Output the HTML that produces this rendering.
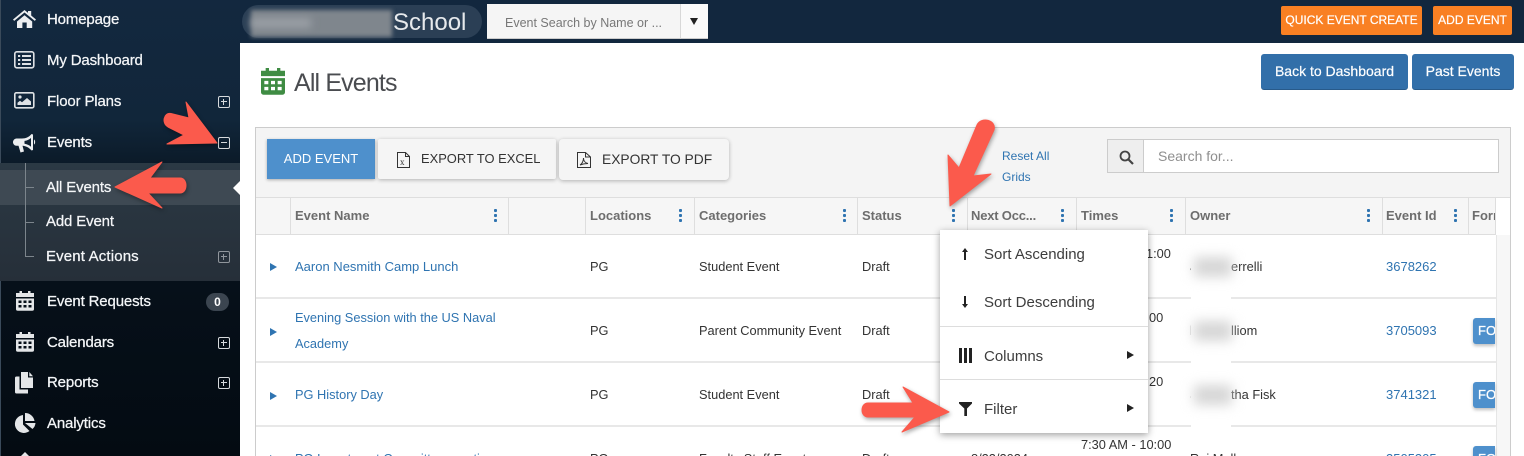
<!DOCTYPE html>
<html lang="en"><head><meta charset="utf-8"><title>All Events</title>
<style>
*{box-sizing:border-box}
html,body{margin:0;padding:0;width:1524px;height:456px;overflow:hidden;background:#fff}
body{position:relative;font-family:"Liberation Sans",Arial,sans-serif;color:#333}
.a,.t{position:absolute}
.t{white-space:nowrap;line-height:20px;font-size:12.8px;color:#333;margin-top:1px}
.n{font-size:15px;color:#f4f6f8;left:47px;-webkit-text-stroke:.25px #f4f6f8;letter-spacing:-.15px}
.s{left:46px}
.l{color:#2f74b1;font-size:12.8px}
.h{font-size:13px;font-weight:bold;color:#6d6d6d;top:205px}
.m{font-size:15px;color:#3d3d3d;left:984px}
.v{position:absolute;top:198px;width:1px;height:36px;background:#dedede}
.d{position:absolute;width:3px;height:13px;top:209px;background:radial-gradient(circle at 1.5px 1.5px,#2f74b1 1.5px,transparent 1.8px) 0 0/3px 5px repeat-y}
.r{position:absolute;left:256px;width:1240px;height:2px;background:#e8e8e8}
.p{position:absolute;left:218px;width:12px;height:12px;border:1.2px solid #d7dadd;border-radius:2px}
.p:before{content:"";position:absolute;left:2px;right:2px;top:3.9px;height:1.3px;background:#d7dadd}
.p.o:after{content:"";position:absolute;top:2px;bottom:2px;left:3.9px;width:1.3px;background:#d7dadd}
.x{position:absolute;width:0;height:0;border-left:7px solid #2f74b1;border-top:4px solid transparent;border-bottom:4px solid transparent;left:270px}
.fo{position:absolute;left:1473px;width:22px;height:26px;background:#4e90cc;border-radius:3px 0 0 3px;color:#fff;font-size:13px;-webkit-text-stroke:.3px #fff;line-height:26px;padding-left:5px;overflow:hidden;box-shadow:0 2px 3px rgba(0,0,0,.25)}
.b{position:absolute;background:#f5f5f5;border-radius:3px;box-shadow:0 1px 4px rgba(0,0,0,.28);color:#333;font-size:13px;line-height:36px}
.blob{position:absolute;left:1194px;width:38px;height:20px;background:#d6d6d6;filter:blur(6px)}
svg{position:absolute;overflow:visible}
</style></head><body>

<!-- sidebar -->
<div class="a" style="left:0;top:0;width:240px;height:456px;background:linear-gradient(#13283f 0,#11263a 120px,#0b1a28 165px,#06101a 280px,#040b12 456px);border-left:1px solid #3a4a5a"></div>
<div class="a" style="left:0;top:163px;width:240px;height:118px;background:linear-gradient(#2b3944,#262f39)"></div>
<div class="a" style="left:0;top:170px;width:240px;height:35px;background:#3e4953"></div>
<div class="a" style="left:233px;top:181px;width:0;height:0;border-right:7px solid #fff;border-top:7px solid transparent;border-bottom:7px solid transparent"></div>
<div class="a" style="left:25px;top:163px;width:1px;height:93px;background:#7c858c"></div>
<div class="a" style="left:25px;top:187px;width:9px;height:1px;background:#7c858c"></div>
<div class="a" style="left:25px;top:222px;width:9px;height:1px;background:#7c858c"></div>
<div class="a" style="left:25px;top:256px;width:9px;height:1px;background:#7c858c"></div>

<svg style="left:13px;top:9px" width="24" height="22" viewBox="0 0 24 22"><path fill="#eceef0" d="M0 10.500 11.500 1 15 3.900V2h3.200v4.500L23 10.500l-1.200 1.400L11.500 3.500 1.200 11.900z"/><path fill="#eceef0" d="M4 12.500 11.500 6.300 19.200 12.500V19h-5.500v-5.500H9.400V19H4z"/></svg>
<svg style="left:14px;top:51px" width="21" height="18" viewBox="0 0 21 18"><rect x=".8" y=".8" width="19" height="16" rx="2" fill="none" stroke="#dfe2e5" stroke-width="1.6"/><path fill="#dfe2e5" d="M4 4h2.200v2H4zM8 4h9v2H8zM4 8h2.200v2H4zM8 8h9v2H8zM4 12h2.200v2H4zM8 12h9v2H8z"/></svg>
<svg style="left:14px;top:92px" width="21" height="17" viewBox="0 0 21 17"><rect x=".8" y=".8" width="19" height="15" rx="1.500" fill="none" stroke="#dfe2e5" stroke-width="1.600"/><circle cx="6" cy="5" r="1.600" fill="#dfe2e5"/><path fill="#dfe2e5" d="M3.500 13v-2.300l2.500-2 2 1.500 5-4.200 4 3.500V13z"/></svg>
<svg style="left:13px;top:133px" width="23" height="20" viewBox="0 0 23 20"><path fill="#eceef0" d="M20 1.500v15.500l-1.400.5C16 14.500 13 13 9.500 12.700L11 18.500 7.500 19.500 5.500 12.700H3.500C1.500 12.700 0 11 0 9.200S1.500 5.500 3.500 5.500H9c4 0 7-1.500 9.600-4.500zM18 5c-2 1.800-4.200 2.600-6.500 2.900v2.900c2.300.4 4.500 1.200 6.500 2.900z"/><path fill="#eceef0" d="M21 6.500c1.500.6 1.500 4.500 0 5z"/></svg>
<svg style="left:16px;top:291px" width="18" height="20" viewBox="0 0 18 20"><path fill="#e4e6e8" fill-rule="evenodd" d="M3.500 0h2.500v2h6V0h2.500v2H18v4H0V2h3.500zM0 7.500h18V18a1.800 1.800 0 0 1-1.800 1.800H1.800A1.800 1.800 0 0 1 0 18zM2.500 9.500v2.500h3V9.500zm5 0v2.500h3V9.500zm5 0v2.500h3V9.500zm-10 4.500v2.500h3V14zm5 0v2.500h3V14zm5 0v2.500h3V14z"/></svg>
<svg style="left:16px;top:332px" width="18" height="20" viewBox="0 0 18 20"><path fill="#e4e6e8" fill-rule="evenodd" d="M3.500 0h2.500v2h6V0h2.500v2H18v4H0V2h3.500zM0 7.500h18V18a1.800 1.800 0 0 1-1.800 1.800H1.800A1.800 1.800 0 0 1 0 18zM2.500 9.500v2.500h3V9.500zm5 0v2.500h3V9.500zm5 0v2.500h3V9.500zm-10 4.500v2.500h3V14zm5 0v2.500h3V14zm5 0v2.500h3V14z"/></svg>
<svg style="left:15px;top:372px" width="20" height="22" viewBox="0 0 20 22"><path fill="#e4e6e8" d="M6 0h7v5.500h5V16H6z"/><path fill="#e4e6e8" d="M14.300 0 18 4.200h-3.700zM4.500 4.500v13H13v4H1.500A1.500 1.500 0 0 1 0 20V6a1.500 1.500 0 0 1 1.500-1.500z"/></svg>
<svg style="left:14px;top:413px" width="22" height="20" viewBox="0 0 22 20"><path fill="#e4e6e8" d="M9 2v9.500l6.500 6.500A9 9 0 1 1 9 2zM11 0a9.500 9.500 0 0 1 9.500 8H11zM11 10h10.500a9 9 0 0 1-3 6z"/></svg>
<div class="a" style="left:20px;top:452px;width:0;height:0;border-left:5px solid transparent;border-right:5px solid transparent;border-bottom:5px solid #e4e6e8"></div>

<div class="t n" style="top:9px">Homepage</div>
<div class="t n" style="top:50px">My Dashboard</div>
<div class="t n" style="top:91px">Floor Plans</div>
<div class="t n" style="top:132px">Events</div>
<div class="t n s" style="top:177px">All Events</div>
<div class="t n s" style="top:211px">Add Event</div>
<div class="t n s" style="top:246px;letter-spacing:.15px">Event Actions</div>
<div class="t n" style="top:291px">Event Requests</div>
<div class="t n" style="top:332px">Calendars</div>
<div class="t n" style="top:372px">Reports</div>
<div class="t n" style="top:413px">Analytics</div>
<div class="p o" style="top:96px"></div>
<div class="p" style="top:137px"></div>
<div class="p o" style="top:251px;opacity:.6"></div>
<div class="p o" style="top:337px"></div>
<div class="p o" style="top:377px"></div>
<div class="a" style="left:206px;top:293px;width:23px;height:18px;border-radius:9px;background:#3b4550;color:#fff;font-size:12px;font-weight:bold;text-align:center;line-height:18px">0</div>

<!-- header -->
<div class="a" style="left:240px;top:0;width:1284px;height:43px;background:#12273e"></div>
<div class="a" style="left:242px;top:5px;width:240px;height:33px;border-radius:17px;background:#2b3f55"></div>
<div class="a" style="left:251px;top:10px;width:141px;height:27px;background:#7f868d;filter:blur(2px)"></div>
<div class="a" style="left:251px;top:18px;width:60px;height:10px;background:#9a9fa5;filter:blur(4px)"></div>
<div class="t" style="left:393px;top:10px;font-size:24px;line-height:24px;color:#e6e9ec">School</div>
<div class="a" style="left:487px;top:4px;width:221px;height:35px;background:#f5f5f5;border-bottom:1px solid #ccc"></div>
<div class="a" style="left:680px;top:4px;width:28px;height:35px;background:#fafafa;border-left:1px solid #d8d8d8;border-bottom:1px solid #ccc"></div>
<div class="a" style="left:690px;top:18px;width:0;height:0;border-top:7px solid #222;border-left:4.500px solid transparent;border-right:4.500px solid transparent"></div>
<div class="t" style="left:505px;top:12px;color:#777;font-size:12.5px">Event Search by Name or ...</div>
<div class="a" style="left:1281px;top:6px;width:141px;height:29px;background:#f98023;border-radius:2px;color:#fff;font-size:12px;line-height:29px;text-align:center;-webkit-text-stroke:.2px #fff">QUICK EVENT CREATE</div>
<div class="a" style="left:1433px;top:6px;width:79px;height:29px;background:#f98023;border-radius:2px;color:#fff;font-size:12px;line-height:29px;text-align:center;-webkit-text-stroke:.2px #fff">ADD EVENT</div>

<!-- title -->
<svg style="left:261px;top:68px" width="24" height="27" viewBox="0 0 18 20" preserveAspectRatio="none"><path fill="#3f8c43" fill-rule="evenodd" d="M3.500 0h2.500v2h6V0h2.500v2H18v4H0V2h3.500zM0 7.500h18V18a1.800 1.800 0 0 1-1.800 1.800H1.800A1.800 1.800 0 0 1 0 18zM2.500 9.500v2.500h3V9.500zm5 0v2.500h3V9.500zm5 0v2.500h3V9.500zm-10 4.500v2.500h3V14zm5 0v2.500h3V14zm5 0v2.500h3V14z"/></svg>
<div class="t" style="left:294px;top:66px;font-size:25px;line-height:32px;color:#4a4c50;letter-spacing:-.85px">All Events</div>
<div class="a" style="left:1261px;top:54px;width:147px;height:36px;background:#326fa9;border-radius:3px;border-bottom:1px solid #285a8a;color:#fff;font-size:14px;line-height:35px;text-align:center;-webkit-text-stroke:.2px #fff">Back to Dashboard</div>
<div class="a" style="left:1412px;top:54px;width:102px;height:36px;background:#326fa9;border-radius:3px;border-bottom:1px solid #285a8a;color:#fff;font-size:14px;line-height:35px;text-align:center;-webkit-text-stroke:.2px #fff">Past Events</div>

<!-- grid -->
<div class="a" style="left:255px;top:127px;width:1256px;height:329px;background:#fff;border:1px solid #ccc;border-bottom:0"></div>
<div class="a" style="left:256px;top:128px;width:1254px;height:70px;background:#f4f4f4;border-bottom:1px solid #dedede"></div>
<div class="a" style="left:267px;top:139px;width:108px;height:40px;background:#4e90cc;box-shadow:0 1px 3px rgba(0,0,0,.3);color:#fff;font-size:13px;line-height:40px;text-align:center">ADD EVENT</div>
<div class="b" style="left:378px;top:139px;width:178px;height:40px;line-height:40px;padding-left:43px;border-radius:2px;font-size:12.9px">EXPORT TO EXCEL</div>
<div class="b" style="left:559px;top:139px;width:170px;height:41px;line-height:41px;padding-left:43px;border-radius:4px;font-size:13.8px">EXPORT TO PDF</div>
<svg style="left:396px;top:152px" width="15" height="16" viewBox="0 0 15 16"><path fill="none" stroke="#333" stroke-width="1" d="M1.500.5h8l4 4v11h-12zM9.500.5v4h4"/><text x="4" y="13" font-size="9" fill="#333" font-family="Liberation Serif">x</text></svg>
<svg style="left:577px;top:152px" width="14" height="16" viewBox="0 0 14 16"><path fill="none" stroke="#333" stroke-width="1" d="M.5.500h8l5 4.500v10.500H.5zM8.500.5v4.500h5M3 13c2-1 3.500-4 3.500-7 0 3 2 5 4.500 5.500-3 0-5.500.5-8 1.500z"/></svg>
<div class="t l" style="left:1002px;top:145px;font-size:12px">Reset All</div>
<div class="t l" style="left:1002px;top:166px;font-size:12px">Grids</div>
<div class="a" style="left:1107px;top:139px;width:392px;height:34px;background:#fff;border:1px solid #ccc"></div>
<div class="a" style="left:1108px;top:140px;width:36px;height:32px;background:#eee;border-right:1px solid #ccc"></div>
<svg style="left:1119px;top:150px" width="15" height="15" viewBox="0 0 15 15"><circle cx="6" cy="6" r="4.500" fill="none" stroke="#444" stroke-width="1.800"/><path stroke="#444" stroke-width="2.200" d="M9.500 9.500 14 14"/></svg>
<div class="t" style="left:1158px;top:145px;font-size:14px;color:#8f8f8f">Search for...</div>

<!-- grid header -->
<div class="a" style="left:256px;top:198px;width:1240px;height:36px;background:#f6f6f6"></div>
<div class="a" style="left:256px;top:234px;width:1240px;height:1px;background:#dedede"></div>
<div class="a" style="left:1496px;top:235px;width:14px;height:221px;background:#f7f7f7;border-left:1px solid #e6e6e6"></div>
<div class="v" style="left:290px"></div><div class="v" style="left:508px"></div><div class="v" style="left:585px"></div><div class="v" style="left:694px"></div><div class="v" style="left:857px"></div><div class="v" style="left:967px"></div><div class="v" style="left:1076px"></div><div class="v" style="left:1185px"></div><div class="v" style="left:1382px"></div><div class="v" style="left:1468px"></div><div class="v" style="left:1495px"></div>
<div class="t h" style="left:295px">Event Name</div>
<div class="t h" style="left:590px">Locations</div>
<div class="t h" style="left:699px">Categories</div>
<div class="t h" style="left:862px">Status</div>
<div class="t h" style="left:971px;letter-spacing:-.2px">Next Occ...</div>
<div class="t h" style="left:1081px">Times</div>
<div class="t h" style="left:1190px">Owner</div>
<div class="t h" style="left:1386px">Event Id</div>
<div class="t h" style="left:1472px;width:23px;overflow:hidden">Forms</div>
<i class="d" style="left:494px"></i><i class="d" style="left:679px"></i><i class="d" style="left:843px"></i><i class="d" style="left:952px"></i><i class="d" style="left:1061px"></i><i class="d" style="left:1170px"></i><i class="d" style="left:1367px"></i><i class="d" style="left:1454px"></i>

<!-- rows -->
<div class="r" style="top:297px"></div><div class="r" style="top:361px"></div><div class="r" style="top:425px"></div>
<i class="x" style="top:263px"></i><i class="x" style="top:328px"></i><i class="x" style="top:392px"></i><i class="x" style="top:455px"></i>
<div class="t l" style="left:295px;top:256px;font-size:13px">Aaron Nesmith Camp Lunch</div>
<div class="t l" style="left:295px;top:307px">Evening Session with the US Naval</div>
<div class="t l" style="left:295px;top:333px">Academy</div>
<div class="t l" style="left:295px;top:384px">PG History Day</div>
<div class="t l" style="left:295px;top:448px">PG Investment Committee meeting</div>
<div class="t" style="left:590px;top:256px">PG</div><div class="t" style="left:590px;top:320px">PG</div><div class="t" style="left:590px;top:384px">PG</div><div class="t" style="left:590px;top:448px">PG</div>
<div class="t" style="left:699px;top:256px">Student Event</div>
<div class="t" style="left:699px;top:320px">Parent Community Event</div>
<div class="t" style="left:699px;top:384px">Student Event</div>
<div class="t" style="left:699px;top:448px">Faculty Staff Event</div>
<div class="t" style="left:862px;top:256px">Draft</div><div class="t" style="left:862px;top:320px">Draft</div><div class="t" style="left:862px;top:384px">Draft</div><div class="t" style="left:862px;top:448px">Draft</div>
<div class="t" style="left:971px;top:448px">8/22/2024</div>
<div class="t" style="left:1146px;top:243px">1:00</div>
<div class="t" style="left:1149px;top:307px">00</div>
<div class="t" style="left:1149px;top:371px">20</div>
<div class="t" style="left:1081px;top:434px">7:30 AM - 10:00</div>
<div class="t" style="left:1190px;top:256px">J</div><div class="t" style="left:1231px;top:256px">errelli</div>
<div class="t" style="left:1190px;top:320px">l</div><div class="t" style="left:1231px;top:320px">lliom</div>
<div class="t" style="left:1190px;top:384px">S</div><div class="t" style="left:1231px;top:384px">tha Fisk</div>
<div class="a" style="left:1191px;top:253px;width:40px;height:195px;background:#fff"></div>
<div class="t" style="left:1190px;top:448px">Raj Mallavarapu</div>
<div class="blob" style="top:257px"></div><div class="blob" style="top:321px"></div><div class="blob" style="top:385px"></div>
<div class="t l" style="left:1386px;top:256px;font-size:13px">3678262</div>
<div class="t l" style="left:1386px;top:320px;font-size:13px">3705093</div>
<div class="t l" style="left:1386px;top:384px;font-size:13px">3741321</div>
<div class="t l" style="left:1386px;top:448px;font-size:13px">3505305</div>
<div class="fo" style="top:318px">FO</div><div class="fo" style="top:382px">FO</div><div class="fo" style="top:446px">FO</div>

<!-- menu -->
<div class="a" style="left:940px;top:230px;width:208px;height:203px;background:#fff;box-shadow:0 2px 7px rgba(0,0,0,.38)"></div>
<div class="a" style="left:940px;top:326px;width:208px;height:1px;background:#ddd"></div>
<div class="a" style="left:940px;top:379px;width:208px;height:1px;background:#ddd"></div>
<div class="t m" style="top:244px">Sort Ascending</div>
<div class="t m" style="top:292px">Sort Descending</div>
<div class="t m" style="top:346px">Columns</div>
<div class="t m" style="top:399px">Filter</div>
<svg style="left:960px;top:248px" width="10" height="12" viewBox="0 0 10 12"><path fill="#222" d="M5 0 8 4H6v8H4V4H2z"/></svg>
<svg style="left:960px;top:296px" width="10" height="12" viewBox="0 0 10 12"><path fill="#222" d="M5 12 8 8H6V0H4v8H2z"/></svg>
<svg style="left:959px;top:348px" width="13" height="15" viewBox="0 0 13 15"><path fill="#222" d="M0 0h3v15H0zM5 0h3v15H5zM10 0h3v15h-3z"/></svg>
<svg style="left:959px;top:402px" width="13" height="14" viewBox="0 0 13 14"><path fill="#222" d="M0 0h13v1.500L8 6.500V14H5.300V6.500L0 1.500z"/></svg>
<div class="a" style="left:1127px;top:351px;width:0;height:0;border-left:7px solid #222;border-top:4px solid transparent;border-bottom:4px solid transparent"></div>
<div class="a" style="left:1127px;top:404px;width:0;height:0;border-left:7px solid #222;border-top:4px solid transparent;border-bottom:4px solid transparent"></div>

<!-- annotation arrows -->
<svg style="left:0;top:0;filter:drop-shadow(1px 2px 2px rgba(0,0,0,.35))" width="1524" height="456" viewBox="0 0 1524 456">
<g fill="#fb5a4c" stroke="#fb5a4c" stroke-width="1" stroke-linejoin="round">
<path d="M217 143 186 102 189 118 171 113.500C164 112 161 123 168 127L184 135 167 144z"/>
<path d="M115 187 162 162 150 178H180C188 178 188 193 180 193H148L162 208z"/>
<path d="M950 206 948 155 959 168 977 125C981 116 997 120 994 130L973 176 991 174z"/>
<path d="M949 412 903 387 913 403H868C860 403 860 417 868 417H915L902 432z"/>
</g></svg>
</body></html>
